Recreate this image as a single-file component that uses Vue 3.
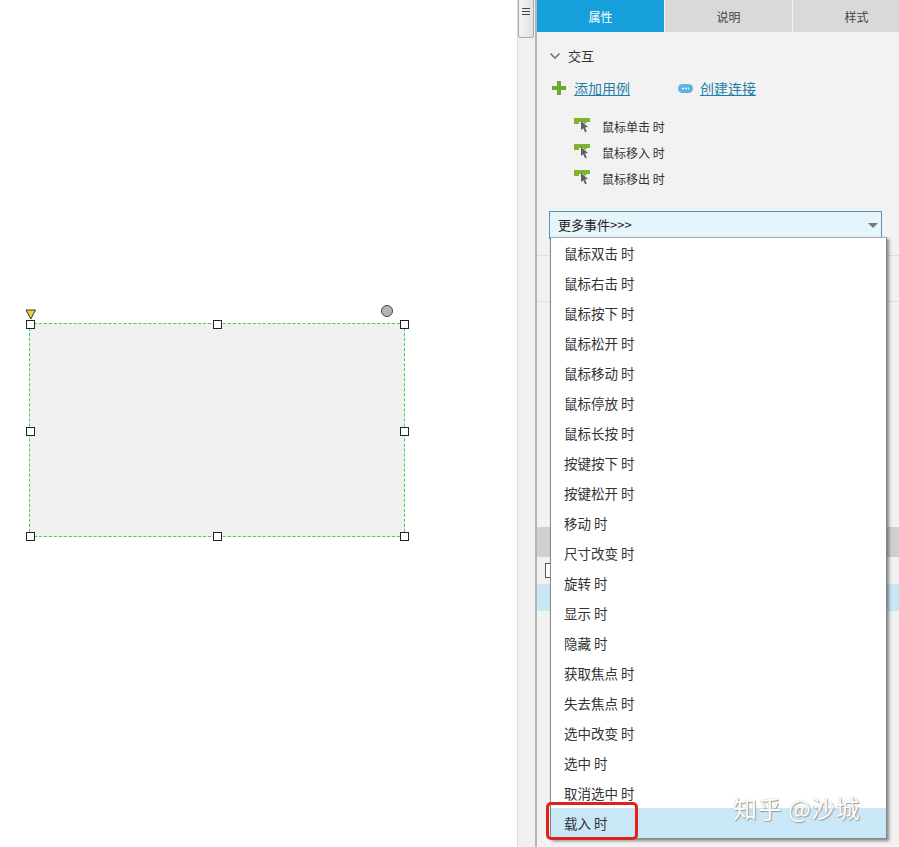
<template>
  <div class="page">
    <div class="canvas">
      <div class="shape"></div>
      <span
        v-for="h in handles"
        :key="h.id"
        class="handle"
        :style="{ left: h.x + 'px', top: h.y + 'px' }"
      ></span>
      <svg class="marker" width="12" height="11" viewBox="0 0 12 11">
        <path d="M1 1h9.500L5.800 10z" fill="#f2cd3a" stroke="#333" stroke-width="1" />
      </svg>
      <span class="rotate"></span>
    </div>

    <div class="gutter">
      <div class="grip">
        <i></i><i></i><i></i>
      </div>
    </div>

    <div class="panel">
      <div class="tabs">
        <div class="tab active">属性</div>
        <div class="tab">说明</div>
        <div class="tab">样式</div>
      </div>

      <div class="section">
        <div class="section-title">
          <svg width="12" height="8" viewBox="0 0 12 8">
            <path d="M1.500 1.500 6 6l4.500-4.500" fill="none" stroke="#777" stroke-width="1.600" />
          </svg>
          <span>交互</span>
        </div>

        <div class="actions">
          <div class="action add">
            <svg width="14" height="14" viewBox="0 0 14 14">
              <path d="M5 0h4v5h5v4H9v5H5V9H0V5h5z" fill="#6aa82e" />
            </svg>
            <a>添加用例</a>
          </div>
          <div class="action link">
            <svg width="15" height="9" viewBox="0 0 15 9">
              <rect width="15" height="9" rx="4.500" fill="#5fb2e0" />
              <path d="M4 4.500h7" stroke="#fff" stroke-width="1.600" stroke-dasharray="2 1" />
            </svg>
            <a>创建连接</a>
          </div>
        </div>

        <ul class="events">
          <li v-for="e in events" :key="e">
            <svg width="16" height="16" viewBox="0 0 16 16">
              <path d="M0 0h16v4h-3l-2 2-2-2H5v2H0z" fill="#7cb52b" />
              <path d="M7 3l7 6-3 .5 1.800 4-1.800.8-1.700-4L7 12z" fill="#5c6068" />
            </svg>
            <span>{{ e }}</span>
          </li>
        </ul>

        <div class="select">
          <span>更多事件&gt;&gt;&gt;</span>
          <i class="caret"></i>
        </div>
      </div>

      <!-- 下拉框后面露出来的部分 -->
      <div class="behind">
        <div class="rule"></div>
        <div class="rule second"></div>
        <div class="gray-band"><span class="knob"></span></div>
        <div class="check-row"><span class="check"></span></div>
        <div class="blue-band"></div>
      </div>

      <ul class="menu">
        <li v-for="m in menuItems" :key="m" :class="{ current: m === '载入 时' }">{{ m }}</li>
      </ul>
      <div class="highlight"></div>
    </div>

    <div class="watermark">知乎 @沙城</div>
  </div>
</template>

<script setup>
const events = ['鼠标单击 时', '鼠标移入 时', '鼠标移出 时']

const menuItems = [
  '鼠标双击 时',
  '鼠标右击 时',
  '鼠标按下 时',
  '鼠标松开 时',
  '鼠标移动 时',
  '鼠标停放 时',
  '鼠标长按 时',
  '按键按下 时',
  '按键松开 时',
  '移动 时',
  '尺寸改变 时',
  '旋转 时',
  '显示 时',
  '隐藏 时',
  '获取焦点 时',
  '失去焦点 时',
  '选中改变 时',
  '选中 时',
  '取消选中 时',
  '载入 时'
]

const handles = [
  { id: 'tl', x: 30, y: 324 },
  { id: 'tm', x: 217, y: 324 },
  { id: 'tr', x: 404, y: 324 },
  { id: 'ml', x: 30, y: 431 },
  { id: 'mr', x: 404, y: 431 },
  { id: 'bl', x: 30, y: 536 },
  { id: 'bm', x: 217, y: 536 },
  { id: 'br', x: 404, y: 536 }
]
</script>

<style>
html,
body {
  margin: 0;
  background: #fff;
  overflow: hidden;
}
</style>

<style scoped>
.page {
  position: relative;
  display: flex;
  width: 899px;
  height: 847px;
  overflow: hidden;
  font-family: "Noto Sans CJK SC", "Liberation Sans", sans-serif;
  font-size: 13px;
  color: #333;
}

.canvas {
  position: relative;
  flex: 0 0 517px;
  background: #fff;
}

.shape {
  position: absolute;
  left: 29px;
  top: 323px;
  width: 374px;
  height: 212px;
  background: #f0f0f0;
  border: 1px dashed #3bd64f;
}

.handle {
  position: absolute;
  width: 7px;
  height: 7px;
  margin: -4px 0 0 -4px;
  background: #fff;
  border: 1px solid #222;
}

.marker {
  position: absolute;
  left: 25px;
  top: 309px;
}

.rotate {
  position: absolute;
  left: 381px;
  top: 305px;
  width: 10px;
  height: 10px;
  border-radius: 50%;
  background: #b5b5b5;
  border: 1px solid #444;
}

.gutter {
  flex: 0 0 20px;
  background: #f0f0f0;
  border-left: 1px solid #dcdcdc;
  box-sizing: border-box;
  border-right: 2px solid #b4b4b4;
}

.grip {
  width: 16px;
  height: 38px;
  margin-left: 0;
  box-sizing: border-box;
  padding-top: 8px;
  background: linear-gradient(90deg, #f4f4f4, #e2e2e2);
  border: 1px solid #a8a8a8;
  border-top: 0;
  border-radius: 0 0 3px 3px;
}

.grip i {
  display: block;
  width: 8px;
  height: 1px;
  margin: 0 auto 2px;
  background: #444;
}

.panel {
  position: relative;
  flex: 0 0 362px;
  background: #f2f2f2;
}

.tabs {
  display: flex;
  height: 32px;
}

.tab {
  flex: 0 0 128px;
  box-sizing: border-box;
  border-right: 1px solid #f4f4f4;
  background: #d9d9d9;
  color: #444;
  font-size: 12px;
  line-height: 34px;
  text-align: center;
}

.tab.active {
  background: #169fdb;
  color: #fff;
}

.section {
  padding: 15px 0 0 12px;
}

.section-title {
  display: flex;
  align-items: center;
  gap: 7px;
  height: 18px;
  line-height: 18px;
}

.actions {
  display: flex;
  margin: 13px 0 0 3px;
  height: 20px;
  line-height: 20px;
}

.action {
  display: flex;
  align-items: center;
  gap: 8px;
  color: #1f7fa8;
  font-size: 14px;
}

.action a {
  text-decoration: underline;
}

.action.link {
  margin-left: 48px;
  gap: 7px;
}

.events {
  list-style: none;
  margin: 15px 0 0 25px;
  padding: 0;
}

.events li {
  display: flex;
  align-items: center;
  gap: 12px;
  height: 26px;
  font-size: 12px;
}

.select {
  position: relative;
  box-sizing: border-box;
  width: 333px;
  height: 28px;
  margin-top: 20px;
  padding-left: 8px;
  background: #e6f5fb;
  border: 1px solid #4c98ad;
  line-height: 25px;
  color: #222;
}

.caret {
  position: absolute;
  right: 3px;
  top: 11px;
  border-left: 5px solid transparent;
  border-right: 5px solid transparent;
  border-top: 5px solid #777;
}

.behind {
  position: absolute;
  inset: 0;
}

.rule {
  position: absolute;
  left: 0;
  right: 0;
  top: 255px;
  height: 1px;
  background: #dfdfdf;
}

.rule.second {
  top: 301px;
}

.gray-band {
  position: absolute;
  left: 0;
  right: 0;
  top: 527px;
  height: 30px;
  background: #d0d0d0;
}

.knob {
  position: absolute;
  right: -3px;
  top: 9px;
  width: 8px;
  height: 12px;
  border-radius: 50%;
  background: #666;
}

.check {
  position: absolute;
  left: 8px;
  top: 563px;
  width: 9px;
  height: 13px;
  background: #fff;
  border: 1px solid #555;
}

.blue-band {
  position: absolute;
  left: 0;
  right: 0;
  top: 584px;
  height: 27px;
  background: #c9e7f6;
}

.menu {
  position: absolute;
  z-index: 2;
  left: 13px;
  top: 237px;
  width: 335px;
  margin: 0;
  padding: 0;
  list-style: none;
  background: #fff;
  border: 1px solid #888;
  border-top-color: #aaa;
  box-shadow: 2px 2px 3px rgba(0, 0, 0, 0.45);
}

.menu li {
  height: 30px;
  padding-left: 13px;
  line-height: 30px;
  color: #333;
  font-size: 13.500px;
}

.menu li.current {
  background: #c9e7f6;
}

.highlight {
  position: absolute;
  z-index: 3;
  left: 9px;
  top: 802px;
  width: 92px;
  height: 38px;
  box-sizing: border-box;
  border: 3px solid #e3211c;
  border-radius: 5px;
}

.watermark {
  position: absolute;
  z-index: 4;
  left: 733px;
  top: 792px;
  color: #fff;
  font-size: 24px;
  line-height: 32px;
  letter-spacing: 0.500px;
  text-shadow: 1px 1px 1px #9a9a9a, 0 0 1px #aaa;
  white-space: nowrap;
}
</style>
